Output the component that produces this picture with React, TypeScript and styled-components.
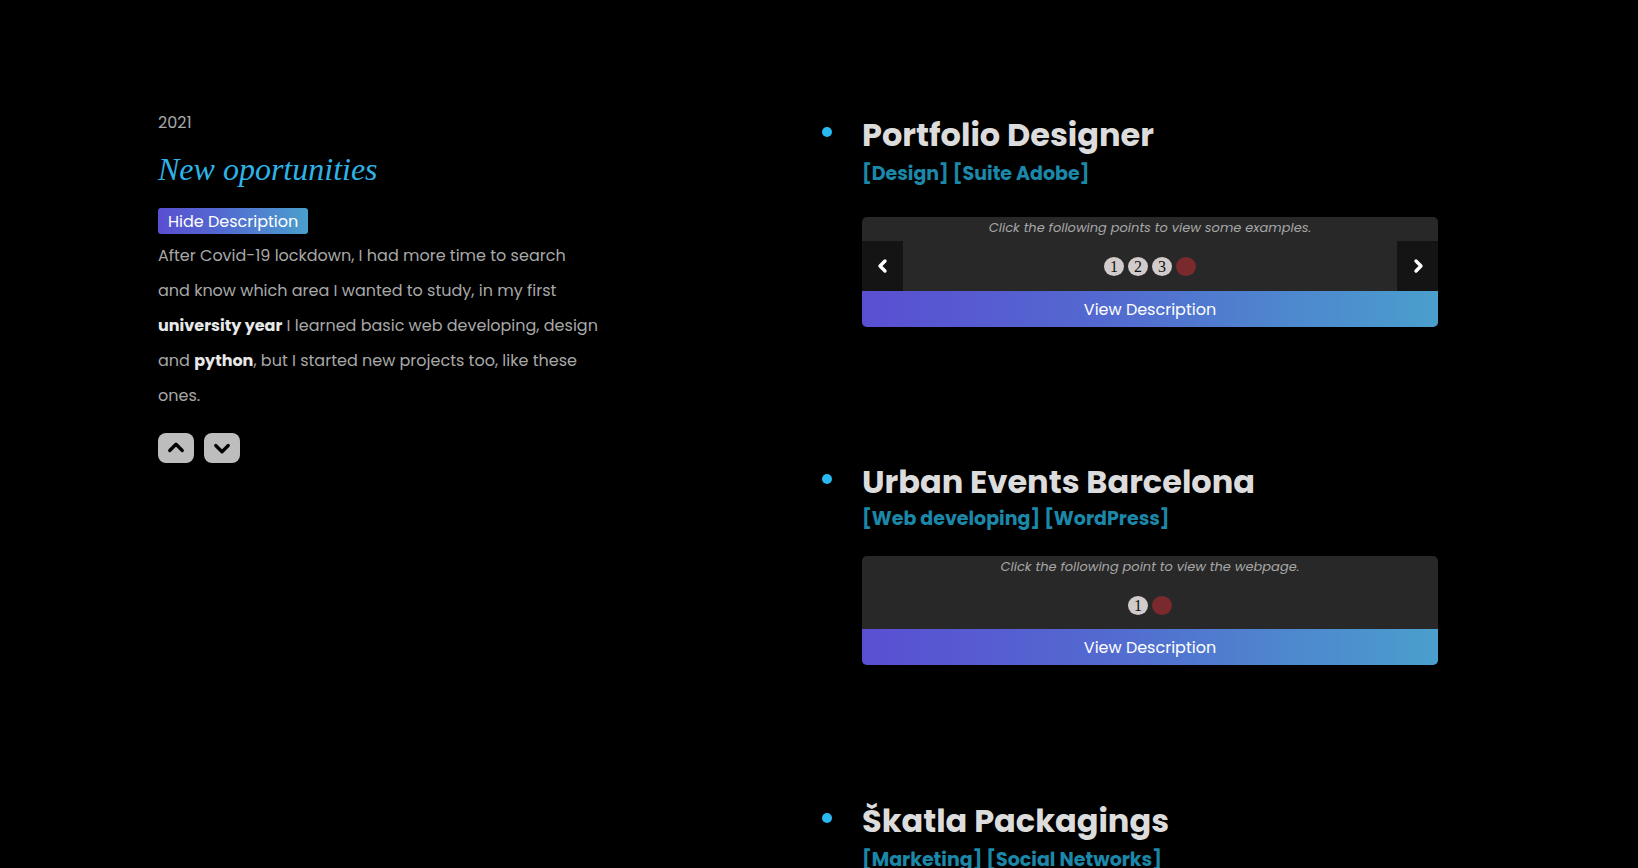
import React from 'react'
import styled, { createGlobalStyle } from 'styled-components'

const GlobalStyle = createGlobalStyle`
  html, body {
    margin: 0;
    padding: 0;
    background: #000;
    overflow: hidden;
  }
  body {
    font-family: 'Poppins', 'Inter', 'Noto Sans', sans-serif;
  }
`

const gradient = 'linear-gradient(90deg, #5a4fd2 0%, #5368d0 40%, #4a9fcd 100%)'

const Page = styled.main`
  display: flex;
  height: 868px;
  overflow: hidden;
  padding-left: 158px;
  box-sizing: border-box;
`

const LeftCol = styled.section`
  width: 664px;
  padding-top: 111px;
`

const Year = styled.div`
  font-size: 16px;
  line-height: 24px;
  color: #a9a9a9;
`

const Headline = styled.h2`
  margin: 14px 0 0;
  font-family: 'Liberation Serif', 'Times New Roman', serif;
  font-style: italic;
  font-weight: 400;
  font-size: 32px;
  line-height: 40px;
  color: #2fb3e6;
`

const GradientButton = styled.button`
  margin-top: 19px;
  height: 26px;
  padding: 0 10px;
  border: none;
  border-radius: 3px;
  background: ${gradient};
  color: #fff;
  font-family: inherit;
  font-size: 16px;
  cursor: pointer;
`

const Paragraph = styled.p`
  width: 442px;
  margin: 4px 0 0;
  font-size: 16px;
  line-height: 35px;
  color: #a8a8a8;

  & b {
    color: #e8e8e8;
    font-weight: 700;
  }
`

const ArrowRow = styled.div`
  display: flex;
  gap: 10px;
  margin-top: 20px;
`

const ArrowButton = styled.button`
  width: 36px;
  height: 30px;
  display: flex;
  align-items: center;
  justify-content: center;
  border: none;
  border-radius: 8px;
  background: #bdbdbd;
  padding: 0;
  cursor: pointer;
`

const RightCol = styled.section`
  width: 620px;
  padding-top: 115px;
`

const Item = styled.article<{ $tight?: boolean }>`
  display: flex;
  margin-bottom: ${({ $tight }) => ($tight ? 136 : 135)}px;
`

const Marker = styled.span`
  flex: 0 0 10px;
  height: 10px;
  margin: 12px 30px 0 0;
  border-radius: 50%;
  background: #29b8ef;
`

const ItemBody = styled.div`
  width: 576px;
`

const Title = styled.h3`
  margin: 0;
  font-size: 32px;
  line-height: 40px;
  font-weight: 700;
  color: #dcdcdc;
`

const Tags = styled.div<{ $tight?: boolean }>`
  margin-top: ${({ $tight }) => ($tight ? 3 : 5)}px;
  font-size: 19px;
  line-height: 28px;
  font-weight: 700;
  color: #1b88a9;
`

const Card = styled.div<{ $tight?: boolean }>`
  margin-top: ${({ $tight }) => ($tight ? 23 : 29)}px;
  border-radius: 5px;
  overflow: hidden;
  background: #282828;
`

const Viewer = styled.div<{ $tight?: boolean }>`
  position: relative;
  height: ${({ $tight }) => ($tight ? 73 : 74)}px;
  padding-top: 1px;
  box-sizing: border-box;
  text-align: center;
`

const Caption = styled.div`
  font-size: 13px;
  line-height: 20px;
  font-style: italic;
  color: #a6a6a6;
`

const Dots = styled.div`
  display: flex;
  justify-content: center;
  gap: 4px;
  margin-top: 19px;
`

const Dot = styled.span<{ $active?: boolean }>`
  width: 20px;
  height: 19px;
  border-radius: 50%;
  display: flex;
  align-items: center;
  justify-content: center;
  background: ${({ $active }) => ($active ? '#7a2a2d' : '#d2cbcb')};
  font-family: 'Liberation Serif', 'Times New Roman', serif;
  font-size: 16px;
  line-height: 1;
  color: #111;
`

const NavButton = styled.button<{ $side: 'left' | 'right' }>`
  position: absolute;
  bottom: 0;
  ${({ $side }) => $side}: 0;
  width: 41px;
  height: 50px;
  border: none;
  padding: 0;
  background: #141414;
  display: flex;
  align-items: center;
  justify-content: center;
  cursor: pointer;
`

const DescButton = styled.button`
  display: block;
  width: 100%;
  height: 36px;
  border: none;
  background: ${gradient};
  color: #fff;
  font-family: inherit;
  font-size: 16px;
  cursor: pointer;
`

const Chevron = ({ dir, color, size = 14, weight = 3 }: { dir: 'up' | 'down' | 'left' | 'right'; color: string; size?: number; weight?: number }) => {
  const paths = {
    up: 'M3 10 L8 5 L13 10',
    down: 'M3 6 L8 11 L13 6',
    left: 'M10 3 L5 8 L10 13',
    right: 'M6 3 L11 8 L6 13',
  }
  return (
    <svg width={size} height={size} viewBox="0 0 16 16" fill="none">
      <path d={paths[dir]} stroke={color} strokeWidth={weight} strokeLinecap="round" strokeLinejoin="round" />
    </svg>
  )
}

type Project = {
  title: string
  tags: string[]
  caption: string
  points: number
  nav: boolean
}

const projects: Project[] = [
  {
    title: 'Portfolio Designer',
    tags: ['Design', 'Suite Adobe'],
    caption: 'Click the following points to view some examples.',
    points: 3,
    nav: true,
  },
  {
    title: 'Urban Events Barcelona',
    tags: ['Web developing', 'WordPress'],
    caption: 'Click the following point to view the webpage.',
    points: 1,
    nav: false,
  },
  {
    title: 'Škatla Packagings',
    tags: ['Marketing', 'Social Networks'],
    caption: 'Click the following points to view some examples.',
    points: 3,
    nav: true,
  },
]

const ProjectItem = ({ p }: { p: Project }) => {
  const tight = !p.nav
  return (
    <Item $tight={tight}>
      <Marker />
      <ItemBody>
        <Title>{p.title}</Title>
        <Tags $tight={tight}>{p.tags.map((t) => `[${t}]`).join(' ')}</Tags>
        <Card $tight={tight}>
          <Viewer $tight={tight}>
            <Caption>{p.caption}</Caption>
            <Dots>
              {Array.from({ length: p.points }, (_, i) => (
                <Dot key={i}>{i + 1}</Dot>
              ))}
              <Dot $active />
            </Dots>
            {p.nav && (
              <>
                <NavButton $side="left">
                  <Chevron dir="left" color="#fff" size={16} weight={3.4} />
                </NavButton>
                <NavButton $side="right">
                  <Chevron dir="right" color="#fff" size={16} weight={3.4} />
                </NavButton>
              </>
            )}
          </Viewer>
          <DescButton>View Description</DescButton>
        </Card>
      </ItemBody>
    </Item>
  )
}

export default function App() {
  return (
    <>
      <GlobalStyle />
      <Page>
        <LeftCol>
          <Year>2021</Year>
          <Headline>New oportunities</Headline>
          <GradientButton>Hide Description</GradientButton>
          <Paragraph>
            After Covid-19 lockdown, I had more time to search and know which area I wanted to study, in my first{' '}
            <b>university year</b> I learned basic web developing, design and <b>python</b>, but I started new
            projects too, like these ones.
          </Paragraph>
          <ArrowRow>
            <ArrowButton aria-label="previous">
              <Chevron dir="up" color="#000" size={20} weight={2.6} />
            </ArrowButton>
            <ArrowButton aria-label="next">
              <Chevron dir="down" color="#000" size={20} weight={2.6} />
            </ArrowButton>
          </ArrowRow>
        </LeftCol>
        <RightCol>
          {projects.map((p) => (
            <ProjectItem key={p.title} p={p} />
          ))}
        </RightCol>
      </Page>
    </>
  )
}
